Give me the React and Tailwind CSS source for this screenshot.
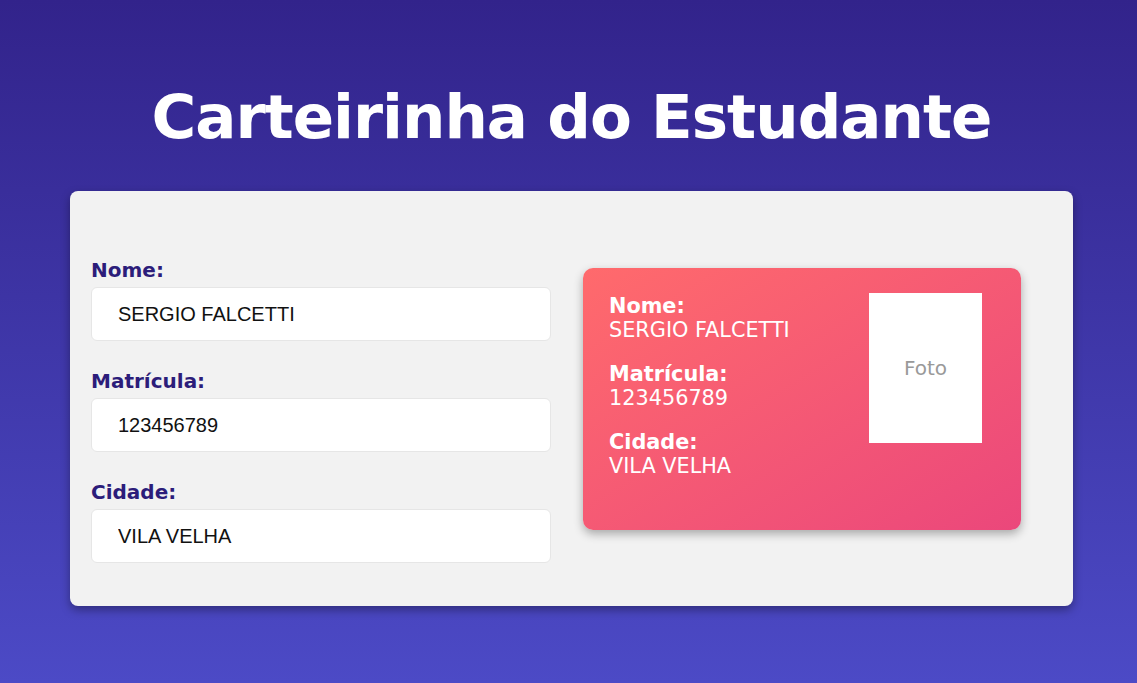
import React, { useState } from 'react';

const Campo = ({ label, value, onChange, last }) => (
  <div className={last ? '' : 'mb-[28px]'}>
    <label className="block mb-[5px] text-[20px] leading-[24px] font-bold text-[#2c1d7a] font-['DejaVu_Sans',sans-serif]">
      {label}
    </label>
    <input
      type="text"
      value={value}
      onChange={onChange}
      className="block w-[460px] h-[54px] pl-[26px] bg-white border border-[#e6e6e6] rounded-md text-[20px] text-[#111] font-['Liberation_Sans',Arial,sans-serif] outline-none"
    />
  </div>
);

const Linha = ({ label, value }) => (
  <div className="mb-[20px] text-white text-[20.8px] leading-[24px] font-['DejaVu_Sans',sans-serif]">
    <div className="font-bold">{label}</div>
    <div>{value}</div>
  </div>
);

export default function App() {
  const [dados, setDados] = useState({
    nome: 'SERGIO FALCETTI',
    matricula: '123456789',
    cidade: 'VILA VELHA'
  });

  const muda = (campo) => (e) => setDados(prev => ({ ...prev, [campo]: e.target.value }));

  return (
    <div className="min-h-[683px] bg-gradient-to-b from-[#32238b] to-[#4c4ac6] pt-[78px] pb-[77px]">
      <h1 className="text-center pl-[6px] text-white text-[61px] leading-[77px] tracking-[-1px] font-bold font-['DejaVu_Sans',sans-serif]">
        Carteirinha do Estudante
      </h1>

      {/* Painel principal */}
      <div className="ml-[70px] mt-[36px] w-[1003px] bg-[#f2f2f2] rounded-lg shadow-[0_4px_10px_rgba(0,0,0,0.35)] flex items-center gap-[32px] pl-[21px]">
        <div className="pt-[67px] pb-[43px]">
          <Campo label="Nome:" value={dados.nome} onChange={muda('nome')} />
          <Campo label="Matrícula:" value={dados.matricula} onChange={muda('matricula')} />
          <Campo label="Cidade:" value={dados.cidade} onChange={muda('cidade')} last />
        </div>

        {/* Cartao */}
        <div className="w-[438px] h-[262px] rounded-[10px] bg-gradient-to-br from-[#ff6a6c] to-[#eb477b] shadow-[0_4px_10px_rgba(0,0,0,0.3)] flex justify-between items-start pt-[25px] pl-[26px] pr-[39px]">
          <div className="mt-[1px]">
            <Linha label="Nome:" value={dados.nome} />
            <Linha label="Matrícula:" value={dados.matricula} />
            <Linha label="Cidade:" value={dados.cidade} />
          </div>
          <div className="w-[113px] h-[150px] bg-white flex items-center justify-center text-[#999] text-[20px] font-['DejaVu_Sans',sans-serif]">
            Foto
          </div>
        </div>
      </div>
    </div>
  );
}
